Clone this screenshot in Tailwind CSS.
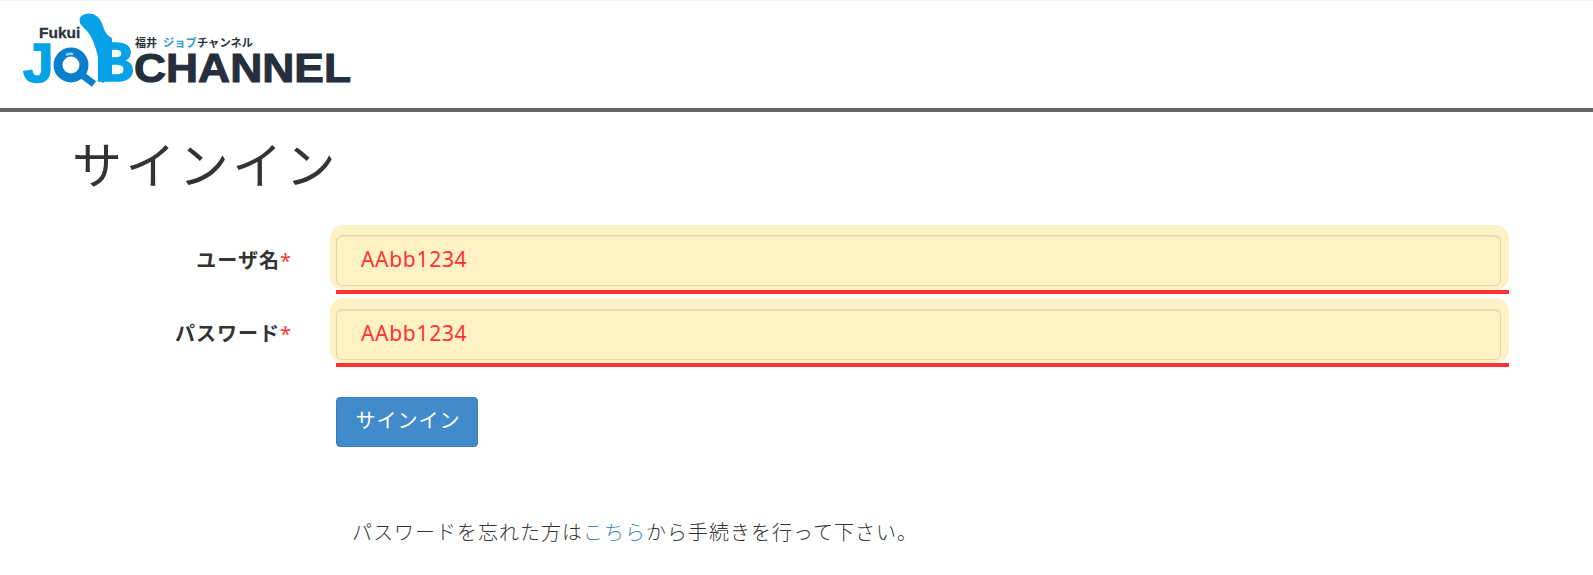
<!DOCTYPE html>
<html lang="ja">

<head>
    <meta charset="UTF-8">
    <meta name="viewport" content="width=device-width, initial-scale=1.0">
    <script src="https://cdn.jsdelivr.net/npm/@tailwindcss/browser@4"></script>
    <title>サインイン | Fukui Job Channel</title>
</head>

<body class="bg-white text-[#333] font-['Noto_Sans','Noto_Sans_CJK_JP',sans-serif] overflow-hidden">
    <header class="h-[112px] border-t border-[#f5f5f5] border-b-[4px] border-b-[#666] pl-[20px]">
        <a href="#" class="block w-[334px] h-[80px] mt-[11px]">
            <svg width="334" height="80" viewBox="20 12 334 80">
                <!-- logo: tall stem of the B, then letters as real text -->
                <text x="39" y="38" font-family="Liberation Sans" font-weight="700" font-size="15.5" fill="#29323c" stroke="#29323c" stroke-width=".3">Fukui</text>
                <text x="23" y="82" font-family="Liberation Sans" font-weight="700" font-size="55" fill="#05a2e8" stroke="#05a2e8" stroke-width="1.5">J</text>
                <text x="95" y="81" font-family="Liberation Sans" font-weight="700" font-size="55" fill="#05a2e8" stroke="#05a2e8" stroke-width="1.5">B</text>
                <path d="M83 15 C92 11 100 16 103 26 C105 33 108 36 112 38 L112 76 L103 83 C100 82 100 78 100 72 C99 58 96 46 90 35 C87 30 82 27 80 23 C79 19 80 16 83 15 Z" fill="#05a2e8" />
                <circle cx="71" cy="65" r="13" fill="#fff" stroke="#0a80cc" stroke-width="9" />
                <path d="M66 55 A11 11 0 0 1 73 54" fill="none" stroke="#8fd6f6" stroke-width="2.5" />
                <path d="M82 75 L94 84" stroke="#0a80cc" stroke-width="7" />
                <text x="135" y="47" font-family="Noto Sans CJK JP" font-weight="700" font-size="11" fill="#29323c">福井</text>
                <text x="163" y="47" font-family="Noto Sans CJK JP" font-weight="700" font-size="11.3" fill="#3498db">ジョブ<tspan fill="#29323c">チャンネル</tspan></text>
                <text x="134" y="82" font-family="Liberation Sans" font-weight="700" font-size="40" textLength="217" lengthAdjust="spacingAndGlyphs" fill="#242f3b" stroke="#242f3b" stroke-width="1">CHANNEL</text>
            </svg>
        </a>
    </header>

    <main class="pl-[72px]">
        <h1 class="text-[50px] leading-[70px] font-normal tracking-[3.4px] mt-[18px] mb-[25px]">サインイン</h1>
        <form class="ml-[-72px]">
            <div class="flex mb-[4px]">
                <label class="w-[292px] pt-[23px] text-right text-[20px] leading-[26px] font-bold tracking-[1px]">ユーザ名<span class="text-[#f33] font-normal">*</span></label>
                <div class="ml-[38px] w-[1179px]">
                    <div class="h-[65px] bg-[#fef1c4] rounded-[14px] pl-[6px] pr-[8px] pt-[10px]">
                        <input type="text" value="AAbb1234" class="w-full h-[51px] px-[24px] pb-[4px] border border-[#e3d6a8] rounded-[6px] text-[#f33] text-[21px] tracking-[.7px] outline-none shadow-[inset_0_1px_1px_rgba(0,0,0,0.075)]">
                    </div>
                    <div class="ml-[6px] h-[4px] bg-[#f33]"></div>
                </div>
            </div>
            <div class="flex">
                <label class="w-[292px] pt-[23px] text-right text-[20px] leading-[26px] font-bold tracking-[1px]">パスワード<span class="text-[#f33] font-normal">*</span></label>
                <div class="ml-[38px] w-[1179px]">
                    <div class="h-[65px] bg-[#fef1c4] rounded-[14px] pl-[6px] pr-[8px] pt-[11px]">
                        <input type="text" value="AAbb1234" class="w-full h-[51px] px-[24px] pb-[4px] border border-[#e3d6a8] rounded-[6px] text-[#f33] text-[21px] tracking-[.7px] outline-none shadow-[inset_0_1px_1px_rgba(0,0,0,0.075)]">
                    </div>
                    <div class="ml-[6px] h-[4px] bg-[#f33]"></div>
                </div>
            </div>
            <div class="pl-[336px] mt-[30px]">
                <button type="button" class="w-[142px] h-[50px] pl-[2px] pb-[2px] bg-[#428bca] border border-[#357ebd] rounded-[4px] text-white text-[20px] font-normal tracking-[1px]">サインイン</button>
            </div>
            <p class="pl-[352px] mt-[71px] text-[20px] leading-[30px] font-light tracking-[1px] text-[#333]">パスワードを忘れた方は<a href="#" class="text-[#428bca]">こちら</a>から手続きを行って下さい。</p>
        </form>
    </main>
</body>

</html>
